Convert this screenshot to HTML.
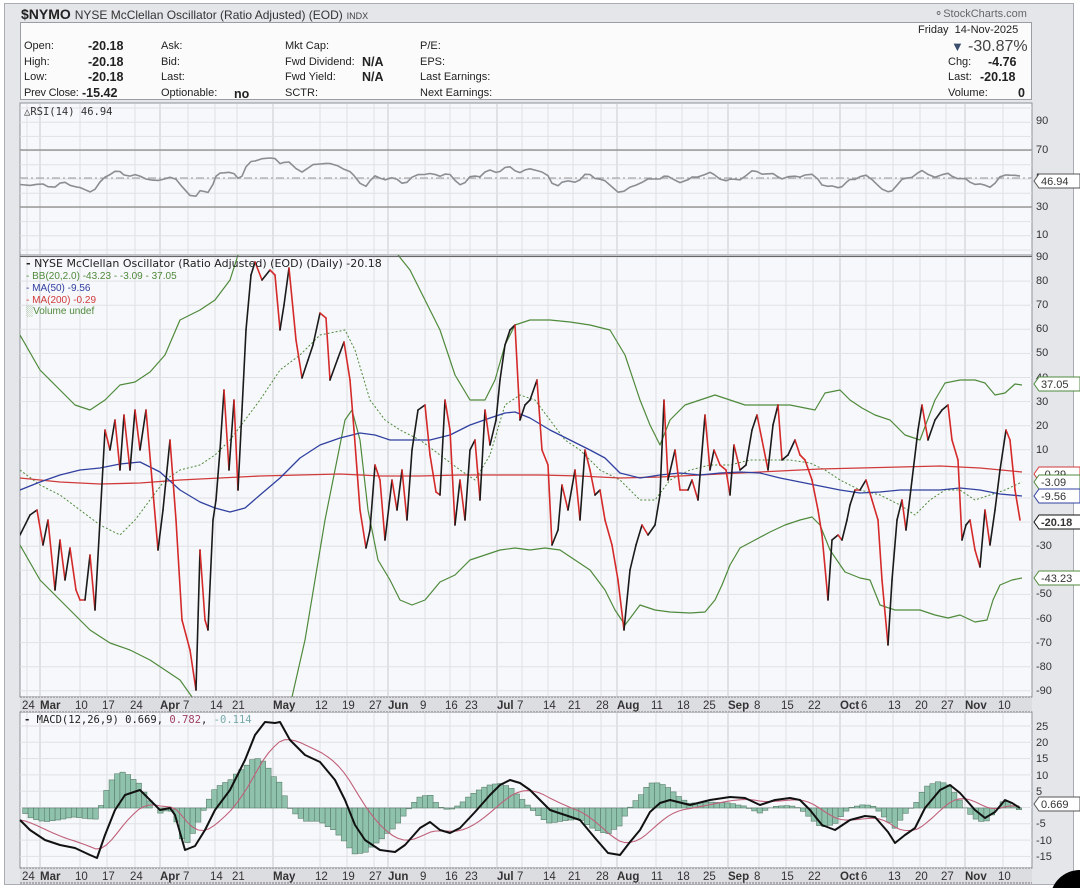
<!DOCTYPE html>
<html><head><meta charset="utf-8">
<style>
html,body{margin:0;padding:0;width:1080px;height:888px;overflow:hidden;background:#fff;font-family:"Liberation Sans",Arial,sans-serif;}
#frame{position:absolute;left:4px;top:3px;width:1068px;height:880px;background:#e4e6ea;border:1px solid #a9acb2;}
.t{position:absolute;white-space:nowrap;color:#222;font-size:11px;line-height:13px;}
.v{font-size:12.5px;font-weight:bold;}
#hdr{position:absolute;left:20px;top:22px;width:1012px;height:78px;background:#fbfbfc;border:1px solid #9a9da3;box-sizing:border-box;}
svg{position:absolute;left:0;top:0;overflow:hidden;}
</style></head><body>
<div id="frame"></div>
<div class="t" style="left:21px;top:6px;font-size:14px;line-height:16px;"><b>$NYMO</b> <span style="font-size:12px;color:#333">NYSE McClellan Oscillator (Ratio Adjusted) (EOD)</span> <span style="font-size:9px;color:#444">INDX</span></div>
<div class="t" style="left:934px;top:8px;font-size:11px;color:#666;">&#9900;StockCharts.com</div>
<div id="hdr"></div>
<div class="t" style="left:24px;top:40px;">Open:</div><div class="t v" style="left:88px;top:40px;">-20.18</div>
<div class="t" style="left:24px;top:56px;">High:</div><div class="t v" style="left:88px;top:56px;">-20.18</div>
<div class="t" style="left:24px;top:71px;">Low:</div><div class="t v" style="left:88px;top:71px;">-20.18</div>
<div class="t" style="left:24px;top:87px;letter-spacing:-0.2px">Prev Close:</div><div class="t v" style="left:82px;top:87px;">-15.42</div>
<div class="t" style="left:161px;top:40px;">Ask:</div><div class="t" style="left:161px;top:56px;">Bid:</div><div class="t" style="left:161px;top:71px;">Last:</div><div class="t" style="left:161px;top:87px;">Optionable:</div><div class="t v" style="left:234px;top:88px;">no</div>
<div class="t" style="left:285px;top:40px;">Mkt Cap:</div><div class="t" style="left:285px;top:56px;">Fwd Dividend:</div><div class="t v" style="left:362px;top:56px;">N/A</div>
<div class="t" style="left:285px;top:71px;">Fwd Yield:</div><div class="t v" style="left:362px;top:71px;">N/A</div><div class="t" style="left:285px;top:87px;">SCTR:</div>
<div class="t" style="left:420px;top:40px;">P/E:</div><div class="t" style="left:420px;top:56px;">EPS:</div><div class="t" style="left:420px;top:71px;">Last Earnings:</div><div class="t" style="left:420px;top:87px;">Next Earnings:</div>
<div class="t" style="left:918px;top:24px;">Friday&nbsp; 14-Nov-2025</div>
<div class="t" style="left:951px;top:40px;font-size:13px;color:#3c4e6e;">&#9660;</div>
<div class="t" style="left:968px;top:38px;font-size:16px;line-height:18px;color:#444">-30.87%</div>
<div class="t" style="left:948px;top:56px;">Chg:</div><div class="t v" style="left:988px;top:56px;">-4.76</div>
<div class="t" style="left:948px;top:71px;">Last:</div><div class="t v" style="left:980px;top:71px;">-20.18</div>
<div class="t" style="left:948px;top:87px;">Volume:</div><div class="t v" style="left:1018px;top:87px;">0</div>
<svg id="s" width="1080" height="888" xmlns="http://www.w3.org/2000/svg" font-family="Liberation Sans, Arial, sans-serif"></svg>
<script>
var s=document.getElementById('s');var h='';
var L=20,R=1032;
function rect(y0,y1){h+='<rect x="'+L+'" y="'+y0+'" width="'+(R-L)+'" height="'+(y1-y0)+'" fill="#f7f8fb" stroke="#8e9197" stroke-width="1"/>';}
var dates=[[27,'24',0],[50,'Mar',1],[80,'10',0],[107,'17',0],[135,'24',0],[170,'Apr',1],[188,'7',0],[215,'14',0],[237,'21',0],[283,'May',1],[320,'12',0],[347,'19',0],[374,'27',0],[398,'Jun',1],[425,'9',0],[450,'16',0],[470,'23',0],[507,'Jul',1],[522,'7',0],[548,'14',0],[573,'21',0],[601,'28',0],[627,'Aug',1],[656,'11',0],[682,'18',0],[708,'25',0],[738,'Sep',1],[759,'8',0],[786,'15',0],[813,'22',0],[850,'Oct',1],[866,'6',0],[893,'13',0],[920,'20',0],[946,'27',0],[975,'Nov',1],[1003,'10',0]];
function vgrid(y0,y1){dates.forEach(function(d){var x=d[2]?d[0]-10:d[0];h+='<line x1="'+x+'" x2="'+x+'" y1="'+y0+'" y2="'+y1+'" stroke="'+(d[2]?'#c8cacd':'#dfe0e3')+'"/>';});}
function hgrid(y0,y1,step){for(var y=y0;y<=y1;y+=step)h+='<line x1="'+L+'" x2="'+R+'" y1="'+y+'" y2="'+y+'" stroke="#e0e1e4"/>';}
function lab(x,y,t,c){h+='<text x="'+x+'" y="'+y+'" font-size="11" fill="'+(c||'#333')+'">'+t+'</text>';}
function pl(pts,c,w,extra){h+='<polyline fill="none" stroke="'+c+'" stroke-width="'+w+'" '+(extra||'')+' stroke-linejoin="round" points="'+pts.map(function(p){return p.join(',')}).join(' ')+'"/>';}
rect(103,255);vgrid(104,254);hgrid(108,254,14.2);
h+='<line x1="'+L+'" x2="'+R+'" y1="150" y2="150" stroke="#888" stroke-width="1.2"/><line x1="'+L+'" x2="'+R+'" y1="207" y2="207" stroke="#888" stroke-width="1.2"/>';
h+='<line x1="'+L+'" x2="'+R+'" y1="178" y2="178" stroke="#999" stroke-dasharray="8,3,2,3"/>';
[[90,124],[70,153],[50,181],[30,210],[10,238]].forEach(function(a){lab(1036,a[1],a[0]);});
rect(255,697);vgrid(256,696);hgrid(257,696,24.1);
for(var v=90,y=260;v>=-90;v-=10,y+=24.1){if(v!==0&&v!==-20&&v!==-10&&v!==-40)lab(1036,y.toFixed(0),v);}
var P=[[20,535],[30,515],[37,510],[43,545],[48,520],[55,590],[60,540],[65,580],[70,548],[76,590],[80,600],[85,600],[90,555],[95,610],[100,520],[105,430],[110,450],[115,420],[120,470],[124,415],[130,470],[135,410],[140,450],[146,410],[152,480],[158,550],[163,510],[170,440],[176,520],[182,620],[190,650],[196,690],[200,550],[205,620],[208,630],[213,520],[216,500],[220,450],[224,390],[229,470],[234,400],[238,490],[242,410],[246,330],[251,275],[255,262],[262,280],[270,270],[275,275],[280,330],[284,305],[289,268],[296,340],[302,378],[308,360],[313,345],[320,313],[326,318],[330,380],[338,358],[344,342],[350,380],[354,430],[360,510],[366,548],[370,530],[375,465],[380,480],[385,540],[392,480],[397,510],[402,470],[407,520],[412,450],[418,410],[425,405],[430,455],[436,492],[440,495],[445,400],[450,430],[455,525],[460,480],[465,520],[470,450],[475,440],[480,500],[485,410],[490,445],[496,420],[500,380],[505,345],[510,330],[515,325],[520,420],[525,405],[530,400],[537,380],[542,450],[548,465],[552,545],[558,530],[562,485],[568,510],[575,470],[580,520],[585,450],[590,470],[595,495],[600,490],[605,520],[612,545],[618,580],[624,630],[630,570],[636,545],[642,525],[648,535],[655,525],[660,495],[664,400],[668,480],[675,450],[680,490],[688,490],[692,480],[698,500],[705,415],[710,470],[714,450],[720,465],[726,470],[730,495],[734,445],[740,470],[746,465],[752,430],[757,415],[762,440],[768,470],[773,425],[778,405],[782,460],[788,455],[795,440],[800,455],[805,460],[812,480],[818,510],[822,535],[828,600],[832,540],[838,535],[842,540],[847,520],[850,505],[855,490],[860,490],[866,480],[872,500],[878,520],[882,580],[888,645],[892,580],[897,520],[902,500],[906,530],[912,480],[918,430],[922,405],[928,440],[935,420],[942,410],[948,405],[952,440],[958,460],[962,540],[966,525],[970,520],[975,550],[980,567],[985,510],[990,545],[995,510],[1000,470],[1006,430],[1010,440],[1015,490],[1020,520]];
var UB=[[20,335],[40,370],[60,390],[75,405],[90,410],[105,400],[120,385],[135,382],[150,372],[165,355],[180,320],[200,310],[215,300],[230,280],[238,255]];
var UB2=[[398,255],[410,270],[425,300],[440,330],[455,375],[470,400],[485,400],[495,380],[505,345],[515,325],[530,320],[550,320],[570,322],[590,325],[610,330],[625,355],[640,400],[650,425],[660,445],[670,420],[685,405],[700,400],[715,395],[730,400],[745,405],[760,405],[775,405],[790,405],[805,408],[815,410],[825,393],[840,390],[850,400],[862,408],[875,415],[890,420],[905,435],[920,440],[935,400],[945,383],[960,380],[975,380],[985,383],[995,395],[1005,393],[1015,384],[1022,385]];
var LB=[[20,545],[40,580],[60,600],[75,615],[90,630],[110,643],[130,650],[150,660],[165,670],[180,680],[192,697]];
var LB2=[[292,697],[305,640],[315,580],[325,520],[335,470],[345,420],[352,410],[360,440],[368,510],[378,560],[390,580],[400,600],[412,605],[425,600],[440,582],[455,575],[470,560],[485,555],[500,550],[515,548],[530,550],[545,548],[560,550],[575,560],[590,570],[605,590],[615,610],[625,625],[640,605],[655,610],[670,612],[690,613],[705,612],[715,600],[722,585],[730,565],[740,548],[755,540],[770,532],[785,525],[800,520],[812,517],[820,525],[830,550],[845,572],[860,578],[870,580],[880,605],[895,610],[920,610],[935,615],[948,618],[960,615],[975,622],[987,620],[993,600],[1000,585],[1012,580],[1022,578]];
var MB=[[20,470],[40,485],[60,495],[80,510],[100,525],[120,535],[135,520],[150,500],[165,480],[180,470],[200,465],[215,455],[230,440],[245,420],[260,400],[280,370],[300,355],[320,335],[345,330],[355,350],[370,400],[385,420],[400,430],[420,440],[440,455],[460,470],[475,480],[490,455],[505,405],[520,395],[535,400],[550,420],[565,440],[580,450],[600,470],[620,480],[640,500],[655,500],[670,480],[690,470],[710,465],[730,465],[750,460],[770,460],[790,460],[810,463],[825,470],[840,480],[860,490],[880,495],[900,505],[915,515],[930,500],[945,490],[960,490],[975,500],[990,495],[1005,490],[1022,482]];
var M50=[[20,490],[40,482],[60,475],[80,470],[100,468],[120,464],[140,462],[160,472],[180,490],[200,502],[215,508],[230,512],[245,508],[260,495],[280,478],[300,458],[320,445],[340,438],[360,433],[375,435],[390,440],[410,440],[430,440],[450,435],[470,425],[490,418],[505,413],[515,412],[530,418],[550,430],[570,440],[590,450],[605,458],[620,473],[640,478],[660,475],[680,473],[700,475],[720,473],[740,472],[760,473],[780,478],[800,482],[820,486],[840,490],[860,493],[880,492],[900,490],[920,490],[940,490],[960,488],[980,490],[1000,494],[1022,496]];
var M200=[[20,478],[60,482],[100,484],[140,483],[180,480],[220,478],[260,476],[300,475],[340,474],[380,476],[420,476],[460,475],[500,475],[540,475],[580,476],[620,478],[660,477],[700,475],[740,473],[780,471],[820,469],[860,468],[900,467],[940,466],[980,468],[1022,472]];
h+='<clipPath id="cm"><rect x="20" y="255" width="1012" height="442"/></clipPath><g clip-path="url(#cm)">';
pl(UB,'#4f8a3c',1.2);pl(UB2,'#4f8a3c',1.2);pl(LB,'#4f8a3c',1.2);pl(LB2,'#4f8a3c',1.2);
pl(MB,'#4f8a3c',1,'stroke-dasharray="2,2"');
pl(M200,'#d03a3a',1.3);pl(M50,'#3040a0',1.3);
for(var i=1;i<P.length;i++){var a=P[i-1],b=P[i];var c=b[1]<a[1]?'#1a1a1a':'#d42a2a';h+='<line x1="'+a[0]+'" y1="'+Math.max(a[1],257)+'" x2="'+b[0]+'" y2="'+Math.max(b[1],257)+'" stroke="'+c+'" stroke-width="1.6" stroke-linecap="round"/>';}
h+='</g>';
h+='<rect x="20" y="256" width="1012" height="1" fill="#666"/>';
function tag(y,t,c,bold){var w=t.length*6.6+8;h+='<path d="M1034,'+y+' l5,-7 h'+w+' v14 h-'+w+' z" fill="#fff" stroke="'+c+'"/>';h+='<text x="1041" y="'+(y+4)+'" font-size="11" fill="#333" '+(bold?'font-weight="bold"':'')+'>'+t+'</text>';}
tag(474,'-0.29','#d03a3a');tag(482,'-3.09','#4f8a3c');tag(496,'-9.56','#3040a0');tag(522,'-20.18','#111',1);tag(578,'-43.23','#4f8a3c');tag(384,'37.05','#4f8a3c');
h+='<text x="26" y="267" font-size="11" fill="#222" font-family="DejaVu Sans, sans-serif"><tspan font-weight="bold">-</tspan> NYSE McClellan Oscillator (Ratio Adjusted) (EOD) (Daily) -20.18</text>';
h+='<text x="26" y="279" font-size="10" fill="#4f8a3c">- BB(20,2.0) -43.23 - -3.09 - 37.05</text>';
h+='<text x="26" y="291" font-size="10" fill="#3040a0">- MA(50) -9.56</text>';
h+='<text x="26" y="303" font-size="10" fill="#d03a3a">- MA(200) -0.29</text>';
h+='<text x="26" y="314" font-size="10" fill="#4f8a3c">&#9617;Volume undef</text>';
var RS=P.map(function(p,i){var y=178+(p[1]-474)*0.09+Math.sin(i*1.7)*4+Math.sin(i*0.63)*3;return [p[0],y];});
var RS2=RS.map(function(p,i){var a=RS[Math.max(0,i-1)][1],b=RS[Math.min(RS.length-1,i+1)][1];return [p[0],Math.max(158,Math.min(201,(a+2*p[1]+b)/4)).toFixed(1)];});
pl(RS2,'#8a8d92',1.6);
tag(181,'46.94','#555');
h+='<text x="24" y="115" font-size="10.5" fill="#333" font-family="DejaVu Sans Mono, monospace">&#9651;RSI(14) 46.94</text>';
function strip(y){h+='<rect x="20" y="'+y+'" width="1012" height="15" fill="#dcdde1"/><line x1="20" x2="1032" y1="'+y+'" y2="'+y+'" stroke="#777" stroke-dasharray="2,1"/><line x1="20" x2="1032" y1="'+(y+15)+'" y2="'+(y+15)+'" stroke="#777" stroke-dasharray="2,1"/>';
dates.forEach(function(d){h+='<text x="'+(d[0]-(d[2]?10:5))+'" y="'+(y+12)+'" font-size="11.5" fill="#333" '+(d[2]?'font-weight="bold"':'')+'>'+d[1]+'</text>';});}
rect(712,868);vgrid(713,867);hgrid(726,867,16.3);
[[25,730],[20,746],[15,762],[10,779],[5,795],[-5,827],[-10,844],[-15,860]].forEach(function(a){lab(1036,a[1],a[0]);});
var M=[[20,820],[30,830],[45,840],[60,845],[75,848],[90,855],[97,858],[105,835],[115,810],[125,795],[140,790],[150,800],[160,810],[170,808],[175,815],[185,850],[195,846],[205,830],[215,810],[230,790],[245,760],[255,735],[265,722],[275,723],[280,722],[290,740],[305,755],[320,762],[335,780],[345,800],[355,825],[365,840],[380,850],[395,852],[405,845],[420,828],[430,822],[440,830],[450,833],[460,828],[475,812],[490,795],[500,785],[510,780],[520,783],[530,790],[540,800],[550,810],[565,815],[580,820],[595,838],[608,853],[620,855],[630,842],[640,830],[650,812],[660,803],[670,800],[690,805],[710,800],[730,797],[745,798],[760,805],[775,800],[790,798],[800,800],[810,810],[822,825],[835,830],[850,820],[865,816],[875,817],[888,832],[895,843],[905,835],[915,828],[925,808],[940,790],[950,785],[960,793],[975,810],[985,818],[995,812],[1005,800],[1012,803],[1020,808]];
function at(x){for(var i=1;i<M.length;i++){if(M[i][0]>=x){var a=M[i-1],b=M[i];return a[1]+(b[1]-a[1])*(x-a[0])/(b[0]-a[0]);}}return M[M.length-1][1];}
var sig=[],mac=[],e=at(20);for(var x=20;x<=1020;x+=5.4){var m=at(x);e=e+(m-e)*0.2;mac.push([x,m]);sig.push([x,e]);}
var Z=808;sig.forEach(function(p,i){var d=(mac[i][1]-p[1])*1.3;var y0=Math.min(Z,Z+d),hh=Math.abs(d);h+='<rect x="'+(p[0]-2.7).toFixed(1)+'" y="'+y0.toFixed(1)+'" width="5.4" height="'+hh.toFixed(1)+'" fill="#8fc2ac" stroke="#5a7d6c" stroke-width="0.6"/>';});
pl(sig.map(function(p){return [p[0].toFixed(1),p[1].toFixed(1)]}),'#c0607a',1.1);
pl(M,'#111',2);
tag(804,'0.669','#555');
h+='<text x="24" y="723" font-size="10.5" font-family="DejaVu Sans Mono, monospace" fill="#222"><tspan font-weight="bold">-</tspan> MACD(12,26,9) 0.669, <tspan fill="#a04060">0.782</tspan>, <tspan fill="#7aa">-0.114</tspan></text>';
strip(697);strip(868);
h+='<circle cx="1080" cy="900" r="30" fill="#000"/>';
s.innerHTML=h;
</script>
</body></html>
